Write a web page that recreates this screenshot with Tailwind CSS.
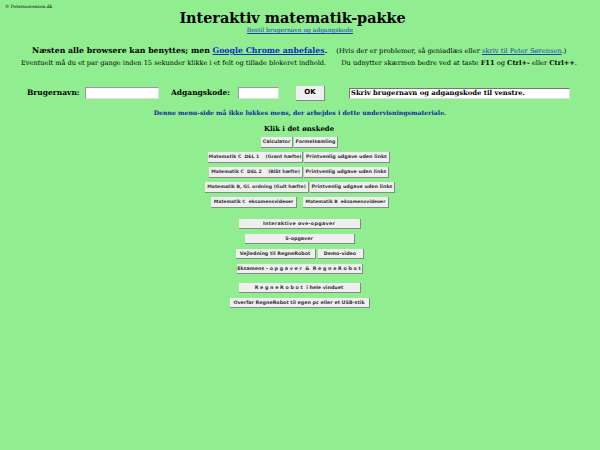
<!DOCTYPE html>
<html lang="da">
<head>
  <meta charset="UTF-8" />
  <title>Interaktiv matematik-pakke</title>
  <script src="https://cdn.jsdelivr.net/npm/@tailwindcss/browser@4"></script>
</head>
<body class="bg-[#90ee90] h-[450px] w-[600px] overflow-hidden font-['DejaVu_Serif',serif] text-black">

  <!-- top -->
  <p class="h-[8px] pt-[4px] pl-[5px] text-[4.4px] leading-[6px]">© Petersoerensen.dk</p>
  <h1 class="text-center text-[14.4px] leading-[20px] font-bold pr-[15px]">Interaktiv matematik-pakke</h1>
  <p class="text-center text-[6px] leading-[8px] -mt-[2px]"><a href="#" class="text-[#1a3fb0] underline">Bestil brugernavn og adgangskode</a></p>

  <div class="flex items-baseline mt-[11px] h-[14px] pl-[32px] whitespace-nowrap">
    <span class="text-[7.8px] font-bold">Næsten alle browsere kan benyttes; men <a href="#" class="text-[#0a2fc0] underline">Google Chrome anbefales</a>.</span>
    <span class="text-[6.7px] ml-[9px]">(Hvis der er problemer, så geniadlæs eller <a href="#" class="text-[#1a3fb0] underline">skriv til Peter Sørensen</a>.)</span>
  </div>
  <div class="flex items-baseline h-[11px] pl-[21px] text-[6.6px] whitespace-nowrap">
    <span>Eventuelt må du et par gange inden 15 sekunder klikke i et felt og tillade blokeret indhold.</span>
    <span class="ml-[15px] text-[6.65px]">Du udnytter skærmen bedre ved at taste <b>F11</b> og <b>Ctrl+-</b> eller <b>Ctrl++</b>.</span>
  </div>

  <!-- login -->
  <div class="flex items-center mt-[16px] h-[14px] pl-[27px] text-[7.5px] font-bold whitespace-nowrap">
    <span class="w-[58px]">Brugernavn:</span>
    <input type="text" class="w-[74px] h-[12px] bg-white border border-t-[#999] border-l-[#999] border-b-[#ddd] border-r-[#ddd]" />
    <span class="ml-[12px] w-[67px]">Adgangskode:</span>
    <input type="text" class="w-[41px] h-[12px] bg-white border border-t-[#999] border-l-[#999] border-b-[#ddd] border-r-[#ddd]" />
    <button class="ml-[17px] w-[29px] h-[15px] bg-[#efefef] border-r border-b border-[#888] text-[7px] font-bold font-['DejaVu_Sans',sans-serif]">OK</button>
    <div class="ml-[24px] w-[221px] h-[11px] bg-white border border-t-[#777] border-l-[#777] border-b-[#ddd] border-r-[#ddd] text-[6.8px] leading-[9px] pl-[1px]">Skriv brugernavn og adgangskode til venstre.</div>
  </div>

  <p class="text-center mt-[7px] text-[6.15px] leading-[10px] font-bold text-[#0a2a9c] pt-[1px]">Denne menu-side må ikke lukkes mens, der arbejdes i dette undervisningsmateriale.</p>
  <p class="text-center mt-[6px] text-[6.9px] leading-[10px] font-bold pr-[2px]">Klik i det ønskede</p>

  <!-- menu buttons -->
  <div class="font-['DejaVu_Sans',sans-serif] text-[4.8px] font-bold text-[#333] whitespace-nowrap">
    <div class="flex justify-center gap-px mt-[3px] pr-[1px]">
      <button class="w-[32px] h-[11px] bg-[#efefef] border-r border-b border-[#888]">Calculator</button>
      <button class="w-[44px] h-[11px] bg-[#efefef] border-r border-b border-[#888]">Formelsamling</button>
    </div>
    <div class="flex justify-center gap-px mt-[4px] pr-[2px]">
      <button class="w-[95px] h-[11px] bg-[#efefef] border-r border-b border-[#888] whitespace-pre text-[4.6px]">Matematik C  DEL 1    (Grønt hæfte)</button>
      <button class="w-[86px] h-[11px] bg-[#efefef] border-r border-b border-[#888]">Printvenlig udgave uden links</button>
    </div>
    <div class="flex justify-center gap-px mt-[4px] pr-[2px]">
      <button class="w-[94px] h-[11px] bg-[#efefef] border-r border-b border-[#888] whitespace-pre text-[4.6px]">Matematik C  DEL 2    (Blåt hæfte)</button>
      <button class="w-[85px] h-[11px] bg-[#efefef] border-r border-b border-[#888]">Printvenlig udgave uden links</button>
    </div>
    <div class="flex justify-center gap-px mt-[4px]">
      <button class="w-[104px] h-[11px] bg-[#efefef] border-r border-b border-[#888] text-[4.6px]">Matematik B, Gl. ordning  (Gult hæfte)</button>
      <button class="w-[85px] h-[11px] bg-[#efefef] border-r border-b border-[#888]">Printvenlig udgave uden links</button>
    </div>
    <div class="flex justify-center gap-[6px] mt-[4px]">
      <button class="w-[86px] h-[11px] bg-[#efefef] border-r border-b border-[#888] whitespace-pre text-[4.5px]">Matematik C  eksamensvideoer</button>
      <button class="w-[86px] h-[11px] bg-[#efefef] border-r border-b border-[#888] whitespace-pre text-[4.5px]">Matematik B  eksamensvideoer</button>
    </div>
    <div class="flex justify-center mt-[11px] pr-[1px]">
      <button class="w-[122px] h-[10px] bg-[#efefef] border-r border-b border-[#888] tracking-[0.3px]">Interaktive øve-opgaver</button>
    </div>
    <div class="flex justify-center mt-[5px] pr-[1px]">
      <button class="w-[110px] h-[10px] bg-[#efefef] border-r border-b border-[#888]">S-opgaver</button>
    </div>
    <div class="flex justify-center gap-[2px] mt-[5px] pr-[1px]">
      <button class="w-[80px] h-[10px] bg-[#efefef] border-r border-b border-[#888]">Vejledning til RegneRobot</button>
      <button class="w-[46px] h-[10px] bg-[#efefef] border-r border-b border-[#888]">Demo-video</button>
    </div>
    <div class="flex justify-center mt-[5px] pr-[1px]">
      <button class="w-[126px] h-[10px] bg-[#efefef] border-r border-b border-[#888] whitespace-pre">Eksamens - o p g a v e r  &amp;  R e g n e R o b o t</button>
    </div>
    <div class="flex justify-center mt-[9px] pr-[1px]">
      <button class="w-[122px] h-[10px] bg-[#efefef] border-r border-b border-[#888] whitespace-pre">R e g n e R o b o t  i hele vinduet</button>
    </div>
    <div class="flex justify-center mt-[5px] pr-[1px]">
      <button class="w-[140px] h-[10px] bg-[#efefef] border-r border-b border-[#888]">Overfør RegneRobot til egen pc eller et USB-stik</button>
    </div>
  </div>

</body>
</html>
